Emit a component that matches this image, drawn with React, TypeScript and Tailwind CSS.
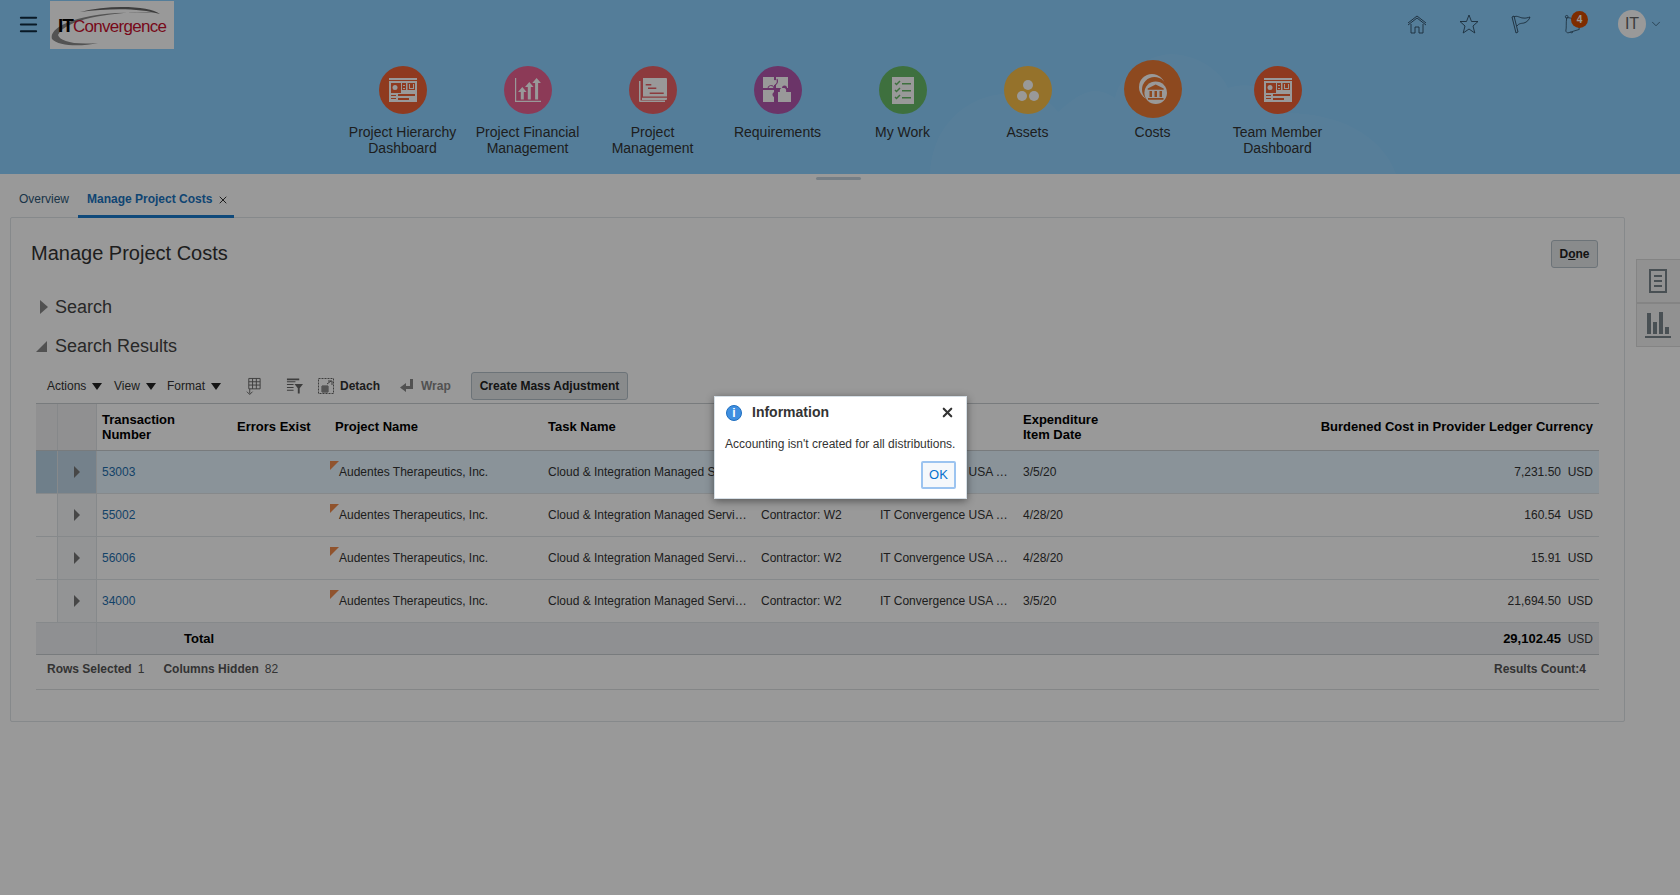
import { ChevronDown, Menu, X } from 'lucide-react';

const gridCols = 'grid grid-cols-[22px_39px_134px_98px_213px_213px_119px_143px_233px_1fr]';

const navItems = [
  { label: ['Project Hierarchy', 'Dashboard'], color: 'bg-[#ee6135]', icon: 'dash' },
  { label: ['Project Financial', 'Management'], color: 'bg-[#e96191]', icon: 'chart' },
  { label: ['Project', 'Management'], color: 'bg-[#e96266]', icon: 'gantt' },
  { label: ['Requirements'], color: 'bg-[#b257ad]', icon: 'puzzle' },
  { label: ['My Work'], color: 'bg-[#68bb68]', icon: 'list' },
  { label: ['Assets'], color: 'bg-[#f8be48]', icon: 'assets' },
  { label: ['Costs'], color: 'bg-[#ec7a35]', icon: 'bank', big: true },
  { label: ['Team Member', 'Dashboard'], color: 'bg-[#ee6135]', icon: 'dash' },
];

const rows = [
  { id: '53003', date: '3/5/20', cost: '7,231.50', selected: true },
  { id: '55002', date: '4/28/20', cost: '160.54' },
  { id: '56006', date: '4/28/20', cost: '15.91' },
  { id: '34000', date: '3/5/20', cost: '21,694.50' },
];

function NavIcon({ name, tint }: { name: string; tint: string }) {
  if (name === 'dash') {
    return (
      <svg viewBox="0 0 28 24" className="w-[28px] h-[24px]">
        <path fill="#fff" d="M0 0h28v2H0zM0 3h28v21H0z" />
        <path fill={tint} d="M2 5h10v10H2zM13 5h4v7h-4zM18.500 5H26v7h-7.500z" />
        <circle cx="6" cy="9.500" r="2.500" fill="#fff" />
        <path fill="#fff" d="M14 7h2v1h-2zM14 10h2v1h-2zM20 6h1v4h3V6h1v5h-5z" />
        <path fill={tint} d="M2 17h5v1H2zM2 20h5v1H2zM9 16h17v2H9zM9 20h11v2H9z" />
      </svg>
    );
  }
  if (name === 'chart') {
    return (
      <svg viewBox="0 0 26 24" className="w-[26px] h-[24px]" fill="#fff">
        <path d="M0 0h1.200v22.800H26V24H0zM5.800 21.500V14H3l4.300-5 4.300 5H8.800v7.500zM12.800 21.500V9H10l4.300-5 4.300 5h-2.800v12.500zM20.100 21.500V5h-2.800l4.300-5 4.300 5h-2.800v16.500z" />
      </svg>
    );
  }
  if (name === 'gantt') {
    return (
      <svg viewBox="0 0 28 24" className="w-[28px] h-[24px]">
        <path fill="#fff" d="M3 0h24a1 1 0 0 1 1 1v20a1 1 0 0 1-1 1H3z" />
        <path fill="#fff" d="M0 3h1.500v19.500H26V24H1a1 1 0 0 1-1-1z" />
        <path fill={tint} d="M3 0h1v18.500h24v1.300H3zM6.700 6h5.600v1.500H6.700zM9 9.500h8.300V11H9zM10.700 14.500h14V16h-14z" />
      </svg>
    );
  }
  if (name === 'puzzle') {
    return (
      <svg viewBox="0 0 29 26" className="w-[29px] h-[26px]" fill="#fff">
        <path d="M0 0h11v11H0zM13 0h12v11H13zM0 13h11v12H0zM15 15h13v10H15z" />
        <circle cx="20" cy="14" r="3.200" />
        <circle cx="12" cy="5.500" r="2.600" fill="#fff" />
        <path d="M5 12a3 3 0 0 1 6-1" fill="none" stroke={tint} strokeWidth="1" />
        <path d="M12 8c2-1 3-3 2-6" fill="none" stroke={tint} strokeWidth="1.200" />
        <path d="M19 11a2.500 2.500 0 0 1 5 0" fill={tint} />
        <path d="M12 20a2.500 2.500 0 0 1 0-5l1 .5v4.500z" fill={tint} />
      </svg>
    );
  }
  if (name === 'list') {
    return (
      <svg viewBox="0 0 22 27" className="w-[22px] h-[27px]">
        <path fill="#fff" d="M0 0h22v27H0z" />
        <path d="M3 6l1.500 1.500L8 4M3 13l1.500 1.500L8 11M3 20l1.500 1.500L8 18" fill="none" stroke={tint} strokeWidth="1.500" />
        <path fill={tint} d="M10 6h9v1.500h-9zM10 13h9v1.500h-9zM10 20h9v1.500h-9z" />
      </svg>
    );
  }
  if (name === 'assets') {
    return (
      <svg viewBox="0 0 22 21" className="w-[22px] h-[21px]" fill="#fff">
        <circle cx="11" cy="5" r="5" />
        <circle cx="5" cy="16" r="5" />
        <circle cx="17" cy="16" r="5" />
      </svg>
    );
  }
  return (
    <svg viewBox="0 0 28 30" className="w-[28px] h-[30px]">
      <circle cx="13" cy="13" r="13" fill="#fff" />
      <circle cx="15.500" cy="15.500" r="12.500" fill={tint} />
      <circle cx="16.700" cy="18.700" r="11.300" fill="#fff" />
      <path fill={tint} d="M16.700 10.500l8 4v1.300h-16v-1.300zM10.500 17H13v6h-2.500zM15.500 17H18v6h-2.500zM20.500 17H23v6h-2.500zM9 24h15.500v1.800H9z" />
    </svg>
  );
}

function NavItem({ item }: { item: (typeof navItems)[number] }) {
  return (
    <div className="w-[125px] flex flex-col items-center text-center">
      <div className="h-[66px] flex items-center">
        <div className={`${item.color} ${item.big ? 'w-[58px] h-[58px] -mt-[2px]' : 'w-[48px] h-[48px]'} rounded-full flex items-center justify-center`}>
          <NavIcon name={item.icon} tint={item.color.slice(4, 11)} />
        </div>
      </div>
      <div className="mt-[1px] text-[14px] leading-[16px] text-[#333]">
        {item.label.map((l) => (
          <div key={l}>{l}</div>
        ))}
      </div>
    </div>
  );
}

function HeaderIcons() {
  return (
    <div className="absolute right-[17px] top-[10px] flex items-center h-[28px]">
      <svg viewBox="0 0 20 20" className="w-[20px] h-[20px] mr-[32px]" fill="none" stroke="#2c4a60" strokeWidth="0.900">
        <path d="M1 9l9-7 9 7M1 11l9-7 9 7M4 10v9h4v-6h4v6h4v-9" />
      </svg>
      <svg viewBox="0 0 20 20" className="w-[20px] h-[20px] mr-[32px]" fill="none" stroke="#2c4a60" strokeWidth="0.900">
        <path d="M10 1l2.500 6.500H19l-5 4.500 1.800 7L10 15l-5.800 4L6 12 1 7.500h6.500z" />
      </svg>
      <svg viewBox="0 0 20 20" className="w-[20px] h-[20px] mr-[33px]" fill="none" stroke="#2c4a60" strokeWidth="0.900">
        <path d="M1 3l2-1 4 16-2 1zM3 3c3-2 6 1 9 1 3 .5 5-.5 7-1-1 3-3 5-6 6-2 .5-5 0-7 3" />
      </svg>
      <div className="relative w-[24px] h-[22px] mr-[30px]">
        <svg viewBox="0 0 20 22" className="w-[18px] h-[22px]" fill="none" stroke="#2c4a60" strokeWidth="0.900">
          <circle cx="3" cy="3" r="1.500" />
          <path d="M4 4c4 0 9 2 12 8l1 5-13 4-2-2c1-5 0-8 1-15zM7 20c1 1 2 1 3 0" />
        </svg>
        <span className="absolute left-[7px] top-[-2px] w-[17px] h-[17px] rounded-full bg-[#d34a00] text-white text-[10px] leading-[17px] text-center font-bold">4</span>
      </div>
      <div className="w-[28px] h-[28px] rounded-full bg-white text-[#666] text-[16px] flex items-center justify-center">IT</div>
      <ChevronDown className="w-[14px] h-[14px] ml-[3px] text-[#2c4a60]" strokeWidth={1.2} />
    </div>
  );
}

function Header() {
  return (
    <header className="relative h-[174px] bg-[#8cd0ff] overflow-hidden">
      <svg viewBox="0 0 480 120" className="absolute left-[930px] top-[54px] w-[480px] h-[120px]">
        <path fill="#92d3ff" d="M0 120C2 75 30 50 60 42 90 35 118 42 128 58 150 38 165 30 185 44 190 20 215 2 240 0c25 0 50 15 58 34 24-8 48 2 58 25 50 0 95 20 110 61z" />
      </svg>
      <div className="absolute left-[17px] top-[13px] text-[#0f2a40]">
        <Menu className="w-[23px] h-[23px]" strokeWidth={2} />
      </div>
      <div className="absolute left-[50px] top-[1px] w-[124px] h-[48px] bg-white overflow-hidden">
        <svg viewBox="0 0 124 48" className="absolute inset-0 w-[124px] h-[48px]">
          <path fill="#8a8a8a" d="M2 38C-2 26 30 8 108 12c-30-3-92 4-100 22 2 6 14 10 40 8-18 4-40 3-46-4z" />
          <path fill="#666" d="M30 11c30-8 70-6 80 2-20-6-50-6-80-2z" />
        </svg>
        <div className="absolute left-[8px] top-[15px] leading-[20px] whitespace-nowrap">
          <span className="text-black font-bold text-[19px] tracking-[-1px]">IT</span>
          <span className="text-[#c8102e] text-[17px] tracking-[-0.7px]">Convergence</span>
        </div>
      </div>
      <HeaderIcons />
      <nav className="relative flex justify-center pt-[57px]">
        {navItems.map((item) => (
          <NavItem key={item.label.join(' ')} item={item} />
        ))}
      </nav>
    </header>
  );
}

function Tabs() {
  return (
    <div className="relative h-[44px] flex items-end pl-[19px]">
      <div className="absolute left-[816px] top-[3px] w-[45px] h-[3px] rounded-sm bg-[#c5d3de]" />
      <span className="text-[12px] leading-[14px] text-[#2d5778] pb-[12px]">Overview</span>
      <div className="ml-[9px] w-[156px] h-[31px] border-b-[3px] border-[#1a7bcb] pl-[9px] flex items-start pt-[3px] relative">
        <span className="text-[12px] leading-[18px] font-bold text-[#1a73bf]">Manage Project Costs</span>
        <X className="ml-[5px] mt-[4px] w-[12px] h-[12px] text-[#333]" strokeWidth={2} />
      </div>
    </div>
  );
}

function Disclosure({ open, label }: { open?: boolean; label: string }) {
  return (
    <div className="flex items-center h-[24px]">
      {open ? (
        <span className="w-0 h-0 border-l-[11px] border-l-transparent border-b-[11px] border-b-[#888] mr-[8px]" />
      ) : (
        <span className="w-0 h-0 ml-[4px] border-y-[7px] border-y-transparent border-l-[8px] border-l-[#888] mr-[7px]" />
      )}
      <span className="text-[18px] leading-[24px] text-[#444]">{label}</span>
    </div>
  );
}

function Toolbar() {
  const caret = <span className="inline-block ml-[6px] w-0 h-0 border-x-[5px] border-x-transparent border-t-[7px] border-t-[#222]" />;
  return (
    <div className="h-[34px] flex items-center pl-[11px] text-[12px] text-[#333]">
      <span className="w-[67px] flex items-center">Actions{caret}</span>
      <span className="w-[53px] flex items-center">View{caret}</span>
      <span className="w-[78px] flex items-center">Format{caret}</span>
      <svg viewBox="0 0 18 20" className="w-[17px] h-[20px] mr-[24px]" fill="none" stroke="#666" strokeWidth="1">
        <path d="M4 2h12v11H4zM4 5.500h12M4 9h12M8 2v11M12 2v11M5 13v5M2 16l3 3 3-3" />
      </svg>
      <svg viewBox="0 0 18 20" className="w-[17px] h-[20px] mr-[15px]" fill="#666">
        <path d="M1 2h13v2H1zM1 5h9v1H1zM1 8h7v1H1zM1 11h7v1H1zM1 14h7v1H1zM9 8h9l-3.500 4.500V18h-2v-5.500z" />
      </svg>
      <svg viewBox="0 0 16 18" className="w-[16px] h-[18px] mr-[6px]" fill="none" stroke="#666" strokeWidth="1">
        <rect x="0.500" y="1.500" width="15" height="15" strokeDasharray="2 1" />
        <path d="M4 9h6v6H4zM4 11h6M4 13h6M6 9v6M8 9v6M10 4h4v4M9 7l4-3" />
      </svg>
      <span className="w-[60px] font-bold text-[#333]">Detach</span>
      <svg viewBox="0 0 14 14" className="w-[14px] h-[14px] mr-[7px]" fill="#888">
        <path d="M10 0h3v10H6v3L0 8.500 6 4v3h4z" />
      </svg>
      <span className="w-[50px] font-bold text-[#888]">Wrap</span>
      <button className="w-[157px] h-[28px] rounded-[3px] border border-[#b5c0c9] bg-[#e4e8ea] text-[12px] font-bold text-[#222]">Create Mass Adjustment</button>
    </div>
  );
}

function ResultsTable() {
  return (
    <div className="text-[12px] text-[#333]">
      <div className={`${gridCols} h-[48px] border-y border-[#c8cdd1] items-center text-[13px] font-bold leading-[15px] text-black`}>
        <div className="h-full bg-[#f0f1f2] border-r border-[#dfe3e6]" />
        <div className="h-full bg-[#f0f1f2] border-r border-[#dfe3e6]" />
        <div className="pl-[5px] -mt-[1px]">Transaction<br />Number</div>
        <div className="pl-[6px] -mt-[2px]">Errors Exist</div>
        <div className="pl-[6px] -mt-[2px]">Project Name</div>
        <div className="pl-[6px] -mt-[2px]">Task Name</div>
        <div />
        <div />
        <div className="pl-[6px] -mt-[1px]">Expenditure<br />Item Date</div>
        <div className="text-right pr-[6px] whitespace-nowrap -mt-[2px]">Burdened Cost in Provider Ledger Currency</div>
      </div>
      {rows.map((r) => (
        <div key={r.id} className={`${gridCols} h-[43px] border-b border-[#dfe4e8] items-center ${r.selected ? 'bg-[#e6f5ff]' : 'bg-white'}`}>
          <div className={`h-full ${r.selected ? 'bg-[#b9d4e6]' : ''} border-r border-[#dfe4e8]`} />
          <div className={`h-full flex items-center justify-center border-r border-[#dfe4e8] ${r.selected ? 'bg-[#c2d8e8]' : 'bg-[#f5f7f9]'}`}>
            <span className="w-0 h-0 border-y-[6px] border-y-transparent border-l-[6px] border-l-[#777]" />
          </div>
          <div className="pl-[5px] text-[#1f6fae]">{r.id}</div>
          <div />
          <div className="relative h-full flex items-center pl-[10px]">
            <span className="absolute left-[1px] top-[10px] w-0 h-0 border-t-[9px] border-t-[#f08a4b] border-r-[9px] border-r-transparent" />
            Audentes Therapeutics, Inc.
          </div>
          <div className="pl-[6px] pr-[6px] truncate">Cloud &amp; Integration Managed Services</div>
          <div className="pl-[6px] truncate">Contractor: W2</div>
          <div className="pl-[6px] pr-[8px] truncate">IT Convergence USA Inc.</div>
          <div className="pl-[6px]">{r.date}</div>
          <div className="text-right pr-[6px]">{r.cost}&nbsp;&nbsp;USD</div>
        </div>
      ))}
      <div className={`${gridCols} h-[32px] items-center bg-[#eef1f3] border-b border-[#c8cdd1]`}>
        <div className="h-full col-span-2 border-r border-[#dfe4e8]" />
        <div className="col-span-2 pl-[87px] text-[13px] font-bold text-black">Total</div>
        <div className="col-span-6 text-right pr-[6px]"><span className="text-[13px] font-bold text-black">29,102.45</span>&nbsp;&nbsp;USD</div>
      </div>
      <div className="h-[35px] flex items-center pl-[11px] pr-[13px] pb-[6px] border-b border-[#dcdfe2] font-bold text-[#555]">
        <span>Rows Selected</span>
        <span className="ml-[6px] font-normal">1</span>
        <span className="ml-[19px]">Columns Hidden</span>
        <span className="ml-[6px] font-normal">82</span>
        <span className="ml-auto">Results Count:4</span>
      </div>
    </div>
  );
}

function SideTabs() {
  return (
    <div className="w-[44px] mt-[41px] ml-[11px] flex flex-col shrink-0">
      <div className="h-[44px] bg-[#f2f2f2] border border-[#dddddd] border-r-0 flex items-center justify-center pr-[1px]">
        <svg viewBox="0 0 18 24" className="w-[18px] h-[24px]" fill="none" stroke="#7a858c" strokeWidth="2">
          <path d="M1 1h16v22H1zM5 7h8M5 12h8M5 17h8" />
        </svg>
      </div>
      <div className="h-[44px] bg-[#f2f2f2] border border-[#dddddd] border-r-0 flex items-center justify-center pr-[1px]">
        <svg viewBox="0 0 26 26" className="w-[26px] h-[26px]" fill="#7a858c">
          <path d="M2 1h4v21H2zM8 10h4v12H8zM14 0h4v22h-4zM20 15h4v7h-4zM0 24h26v2H0z" />
        </svg>
      </div>
    </div>
  );
}

function InfoDialog() {
  return (
    <div className="absolute left-[714px] top-[396px] w-[253px] h-[103px] bg-white border border-[#d6dfe6] shadow-[0_2px_8px_rgba(0,0,0,0.45)]">
      <div className="flex items-center h-[31px] pl-[11px] pr-[11px]">
        <span className="w-[16px] h-[16px] rounded-full bg-[#3f8fe0] border border-[#1f6fc0] text-white text-[12px] leading-[14px] font-bold text-center">i</span>
        <span className="ml-[10px] text-[14px] font-bold text-[#333]">Information</span>
        <X className="ml-auto w-[15px] h-[15px] text-[#333]" strokeWidth={3.4} />
      </div>
      <p className="pl-[10px] mt-[8px] text-[12px] leading-[16px] text-[#333]">Accounting isn't created for all distributions.</p>
      <button className="absolute right-[10px] bottom-[9px] w-[35px] h-[28px] rounded-[2px] border-2 border-[#9cc4f0] bg-[#f5f8fb] text-[13px] text-[#0572ce]">OK</button>
    </div>
  );
}

export default function App() {
  return (
    <div className="relative w-[1680px] h-[895px] overflow-hidden bg-white font-['Liberation_Sans',Arial,sans-serif]">
      <Header />
      <Tabs />
      <div className="flex pl-[10px]">
        <main className="w-[1615px] h-[505px] mt-[-1px] border border-[#dfe4e8] rounded-[2px] bg-white pl-[25px] pr-[25px] shrink-0">
          <div className="flex items-center justify-between h-[36px] mt-[18px] ml-[-5px]">
            <h1 className="text-[20px] text-[#333] -mt-[2px]">Manage Project Costs</h1>
            <button className="w-[47px] h-[28px] mr-[1px] rounded-[3px] border border-[#b5c0c9] bg-[#e4e8ea] text-[12px] font-bold text-[#222]">D<span className="underline">o</span>ne</button>
          </div>
          <div className="mt-[23px]"><Disclosure label="Search" /></div>
          <div className="mt-[15px]"><Disclosure open label="Search Results" /></div>
          <div className="mt-[11px]"><Toolbar /></div>
          <ResultsTable />
        </main>
        <SideTabs />
      </div>
      <div className="absolute inset-0 bg-black/40" />
      <InfoDialog />
    </div>
  );
}
